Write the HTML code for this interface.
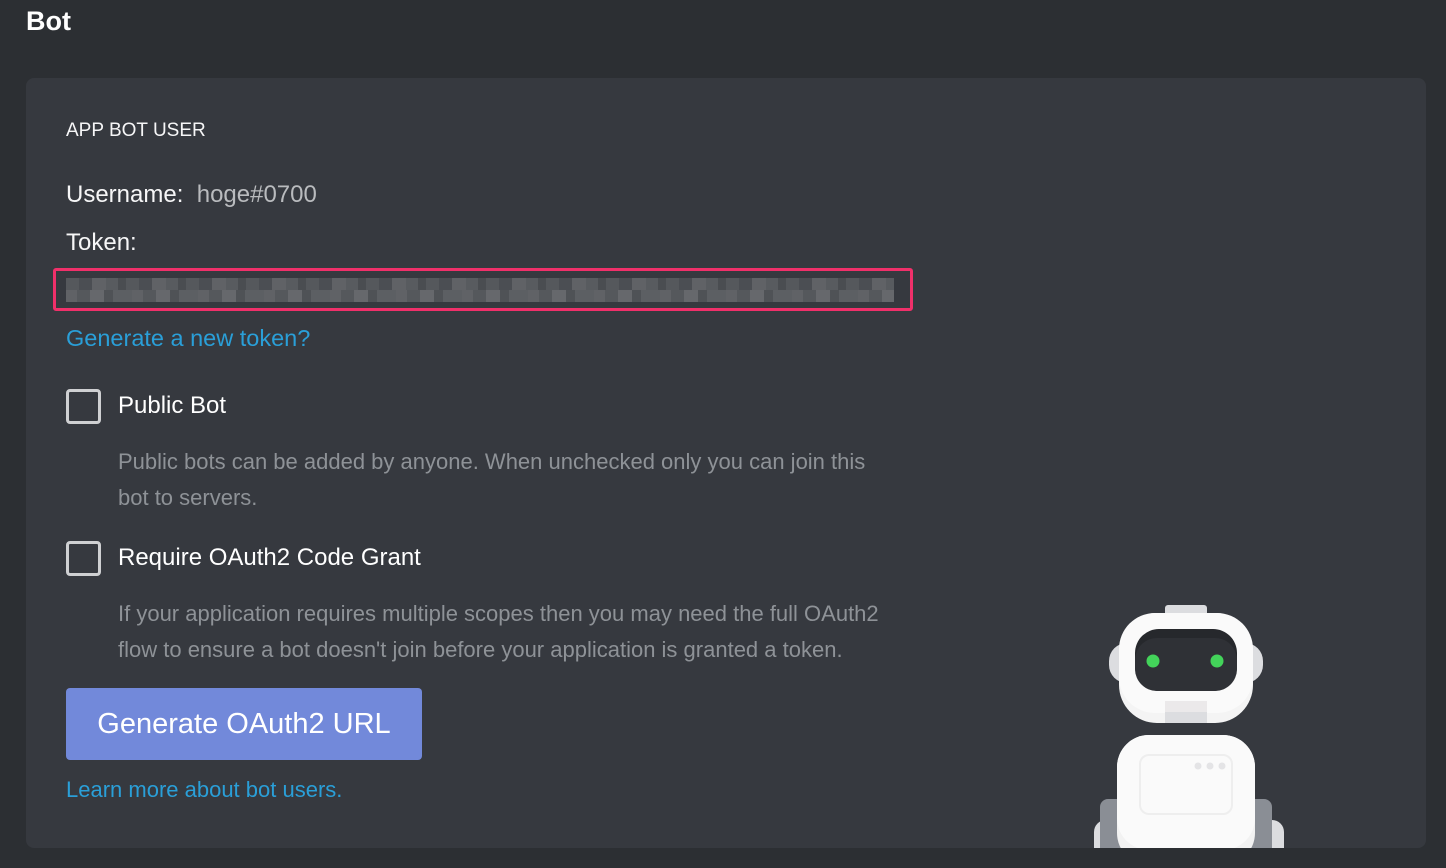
<!DOCTYPE html>
<html><head><meta charset="utf-8"><style>
*{margin:0;padding:0;box-sizing:border-box}
body{width:1446px;height:868px;background:#2c2f33;font-family:"Liberation Sans",sans-serif;position:relative;overflow:hidden;color:#fff}
.a{position:absolute;white-space:nowrap}
.card{position:absolute;left:26px;top:78px;width:1400px;height:770px;background:#36393f;border-radius:8px;overflow:hidden}
.cb{position:absolute;width:35px;height:35px;border:3px solid #cfd0d2;border-radius:4px}
.desc{color:#8e9297;font-size:22px;line-height:36px}
.link{color:#2a9fd8;font-size:22px}
</style></head><body>
<div class="a" style="left:26px;top:6px;font-size:27px;font-weight:bold">Bot</div>
<div class="card"></div>
<div class="a" style="left:66px;top:120px;font-size:19px;color:#f6f6f7">APP BOT USER</div>
<div class="a" style="left:66px;top:181px;font-size:24px;color:#f6f6f7">Username:&nbsp; <span style="color:#b9bbbe">hoge#0700</span></div>
<div class="a" style="left:66px;top:229px;font-size:24px;color:#f6f6f7">Token:</div>
<div class="a" style="left:53px;top:268px;width:860px;height:43px;border:3px solid #f0306a;border-radius:3px"></div>
<div class="a" style="left:66px;top:278px;width:828px;height:12px;background:repeating-linear-gradient(90deg,#55585c 0 13px,#4b4e53 13px 26px,#606266 26px 40px,#585b5f 40px 52px,#4a4d51 52px 60px)"></div>
<div class="a" style="left:66px;top:290px;width:828px;height:12px;background:repeating-linear-gradient(90deg,#606266 0 11px,#55585c 11px 24px,#66686c 24px 38px,#4f5256 38px 47px,#5c5f63 47px 66px)"></div>
<div class="a link" style="left:66px;top:325px;font-size:23.5px">Generate a new token?</div>
<div class="cb" style="left:66px;top:389px"></div>
<div class="a" style="left:118px;top:392px;font-size:24px">Public Bot</div>
<div class="a desc" style="left:118px;top:444px">Public bots can be added by anyone. When unchecked only you can join this<br>bot to servers.</div>
<div class="cb" style="left:66px;top:541px"></div>
<div class="a" style="left:118px;top:544px;font-size:24px">Require OAuth2 Code Grant</div>
<div class="a desc" style="left:118px;top:596px">If your application requires multiple scopes then you may need the full OAuth2<br>flow to ensure a bot doesn't join before your application is granted a token.</div>
<div class="a" style="left:66px;top:688px;width:356px;height:72px;background:#7289da;border-radius:4px;font-size:29px;line-height:72px;text-align:center">Generate OAuth2 URL</div>
<div class="a link" style="left:66px;top:777px">Learn more about bot users.</div>
<svg class="a" style="left:0;top:0" width="1446" height="848" viewBox="0 0 1446 848">
<rect x="1165" y="605" width="42" height="14" rx="3" fill="#dcdde0"/>
<rect x="1109" y="643" width="154" height="40" rx="18" fill="#dcdde0"/>
<rect x="1119" y="613" width="134" height="110" rx="38" fill="#f4f4f4"/>
<rect x="1119" y="613" width="134" height="100" rx="36" fill="#fafafa"/>
<rect x="1135" y="629" width="102" height="62" rx="24" fill="#26282c"/>
<rect x="1135" y="638" width="102" height="53" rx="22" fill="#2f3136"/>
<circle cx="1153" cy="661" r="6.5" fill="#43d35a"/>
<circle cx="1217" cy="661" r="6.5" fill="#43d35a"/>
<rect x="1165" y="701" width="42" height="22" fill="#dcdde0"/>
<rect x="1165" y="701" width="42" height="11" fill="#ebe9ea"/>
<rect x="1094" y="820" width="190" height="40" rx="12" fill="#dcdde0"/>
<rect x="1100" y="799" width="172" height="60" rx="8" fill="#8a8e95"/>
<rect x="1117" y="735" width="138" height="130" rx="32" fill="#f2f2f2"/>
<rect x="1117" y="735" width="138" height="115" rx="32" fill="#fafafa"/>
<rect x="1140" y="755" width="92" height="59" rx="9" fill="none" stroke="#eeeeee" stroke-width="2"/>
<circle cx="1198" cy="766" r="3.5" fill="#e4e4e6"/>
<circle cx="1210" cy="766" r="3.5" fill="#e4e4e6"/>
<circle cx="1222" cy="766" r="3.5" fill="#e4e4e6"/>
</svg>
<div class="a" style="left:0;top:848px;width:1446px;height:20px;background:#2c2f33"></div>
</body></html>
